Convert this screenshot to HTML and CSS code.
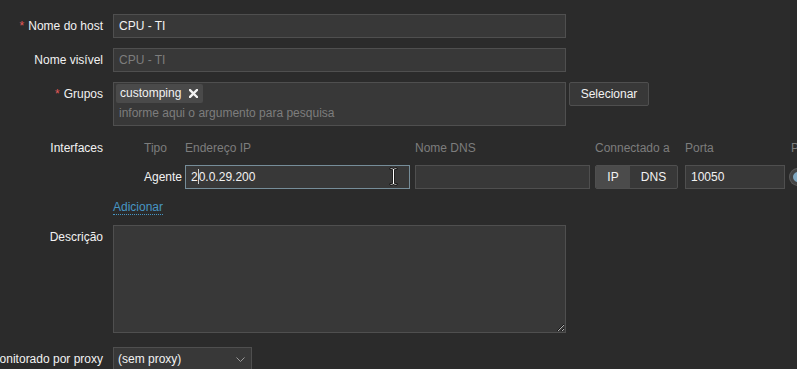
FILE: index.html
```html
<!DOCTYPE html>
<html lang="pt">
<head>
<meta charset="utf-8">
<link rel="stylesheet" href="styles.css">
</head>
<body>
<div class="form">
  <div class="label"><span class="req">*</span>Nome do host</div>
  <div class="field"><div class="input wide">CPU - TI</div></div>

  <div class="label">Nome visível</div>
  <div class="field"><div class="input wide placeholder">CPU - TI</div></div>

  <div class="label"><span class="req">*</span>Grupos</div>
  <div class="field row">
    <div class="multiselect">
      <div class="tags"><span class="tag">customping<svg class="tag-x" width="9" height="9" viewBox="0 0 9 9"><path d="M1 1L8 8M8 1L1 8" stroke="#f2f2f2" stroke-width="2.4" stroke-linecap="square"/></svg></span></div>
      <div class="ms-placeholder">informe aqui o argumento para pesquisa</div>
    </div>
    <div class="btn">Selecionar</div>
  </div>

  <div class="label">Interfaces</div>
  <div class="field">
    <div class="iface">
      <div></div>
      <div class="th">Tipo</div>
      <div class="th">Endereço IP</div>
      <div class="th">Nome DNS</div>
      <div class="th">Connectado a</div>
      <div class="th">Porta</div>
      <div class="th">P</div>

      <div></div>
      <div class="td-type">Agente</div>
      <div><div class="input ip focused">2<span class="caret"></span>0.0.29.200<svg class="ibeam" width="9" height="19" viewBox="0 0 9 19"><path d="M1 1H3.5L4.5 2L5.5 1H8V2.5H5.5V16.5H8V18H5.5L4.5 17L3.5 18H1V16.5H3.5V2.5H1Z" fill="#fff" stroke="#000" stroke-width="0.8"/></svg></div></div>
      <div><div class="input dns"></div></div>
      <div>
        <div class="toggle"><span class="seg on">IP</span><span class="seg">DNS</span></div>
      </div>
      <div><div class="input port">10050</div></div>
      <div><span class="radio"></span></div>
    </div>
    <div class="add-row"><span class="link">Adicionar</span></div>
  </div>

  <div class="label">Descrição</div>
  <div class="field"><textarea class="textarea"></textarea></div>

  <div class="label proxy-label">Monitorado por proxy</div>
  <div class="field proxy-field">
    <div class="select">(sem proxy)<svg class="chev" width="9" height="5" viewBox="0 0 9 5"><path d="M0.5 0.5L4.5 4.5L8.5 0.5" fill="none" stroke="#9a9a9a" stroke-width="1"/></svg></div>
  </div>
</div>
</body>
</html>
```

FILE: styles.css
```css
html, body {
  margin: 0;
  padding: 0;
  background: #2b2b2b;
  overflow: hidden;
  width: 797px;
  height: 369px;
}

body {
  font-family: "Liberation Sans", Arial, sans-serif;
  font-size: 12px;
  color: #f2f2f2;
}

.form {
  display: grid;
  grid-template-columns: 103px 1fr;
  column-gap: 10px;
  row-gap: 10px;
  padding-top: 14px;
}

.label {
  display: flex;
  justify-content: flex-end;
  white-space: nowrap;
  line-height: 24px;
  height: 24px;
  min-width: 0;
}

.req {
  color: #e45959;
  margin-right: 4px;
}

.field {
  min-width: 0;
}

.row {
  display: flex;
  align-items: flex-start;
}

.input {
  box-sizing: border-box;
  height: 24px;
  line-height: 22px;
  padding: 0 5px;
  background: #383838;
  border: 1px solid #4f4f4f;
  color: #f2f2f2;
  white-space: nowrap;
  position: relative;
}

.wide {
  width: 453px;
}

.placeholder {
  color: #7d7d7d;
}

.multiselect {
  box-sizing: border-box;
  width: 453px;
  height: 44px;
  background: #383838;
  border: 1px solid #4f4f4f;
  padding: 1px 2px;
}

.tags {
  display: flex;
}

.tag {
  display: inline-flex;
  align-items: center;
  height: 19px;
  padding: 0 5px 0 4px;
  background: #4a4a4a;
  border-radius: 2px;
  line-height: 19px;
}

.tag-x {
  margin-left: 8px;
}

.ms-placeholder {
  color: #7d7d7d;
  line-height: 20px;
  padding-left: 3px;
  margin-top: 0px;
}

.btn {
  box-sizing: border-box;
  margin-left: 3px;
  width: 80px;
  height: 24px;
  line-height: 22px;
  text-align: center;
  background: #383838;
  border: 1px solid #4f4f4f;
  border-radius: 2px;
  color: #f2f2f2;
}

.iface {
  display: grid;
  grid-template-columns: 31px 41px 230px 180px 90px 106px 40px;
  grid-template-rows: 24px 24px;
  row-gap: 5px;
  white-space: nowrap;
}

.th {
  color: #7d7d7d;
  line-height: 24px;
}

.td-type {
  line-height: 24px;
}

.ip {
  width: 225px;
}

.focused {
  border-color: #768d99;
}

.caret {
  display: inline-block;
  width: 1px;
  height: 15px;
  background: #d0d0d0;
  vertical-align: -3px;
}

.ibeam {
  position: absolute;
  left: 203px;
  top: 1px;
}

.dns {
  width: 175px;
}

.toggle {
  box-sizing: border-box;
  display: flex;
  width: 83px;
  height: 24px;
  border: 1px solid #4f4f4f;
  border-radius: 2px;
  overflow: hidden;
  background: #383838;
}

.seg {
  display: block;
  line-height: 22px;
  text-align: center;
  flex: 1 1 auto;
}

.seg.on {
  flex: 0 0 34px;
  background: #4b4b4b;
}

.port {
  width: 100px;
}

.radio {
  display: block;
  box-sizing: border-box;
  width: 16px;
  height: 16px;
  margin-top: 4px;
  margin-left: -1px;
  border-radius: 50%;
  border: 3px solid #444;
  background: #7fa6bf;
  box-shadow: 0 0 0 1px #5a5a5a;
}

.add-row {
  margin-top: 11px;
  line-height: 14px;
  height: 15px;
}

.link {
  color: #4796c4;
  border-bottom: 1px dotted #4796c4;
}

.textarea {
  display: block;
  box-sizing: border-box;
  width: 453px;
  height: 108px;
  margin: 0;
  background: #383838;
  border: 1px solid #4f4f4f;
  color: #f2f2f2;
  color-scheme: dark;
  resize: both;
  outline: none;
}

.proxy-label {
  margin-top: 4px;
}

.proxy-field {
  margin-top: 4px;
}

.select {
  box-sizing: border-box;
  position: relative;
  width: 139px;
  height: 24px;
  line-height: 22px;
  padding: 0 4px;
  background: #383838;
  border: 1px solid #4f4f4f;
}

.chev {
  position: absolute;
  right: 6px;
  top: 9px;
}
```
